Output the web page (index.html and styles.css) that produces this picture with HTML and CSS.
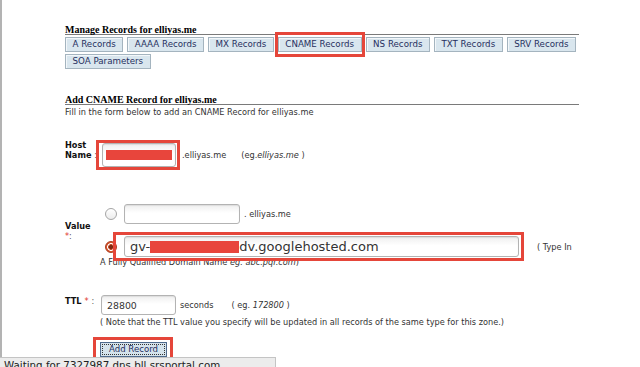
FILE: index.html
```html
<!DOCTYPE html>
<html>
<head>
<meta charset="utf-8">
<title>Add CNAME Record</title>
<link rel="stylesheet" href="styles.css">
</head>
<body>
<div class="page">
  <h2 class="section-title">Manage Records for elliyas.me</h2>
  <div class="tabs">
    <button class="tab">A Records</button>
    <button class="tab">AAAA Records</button>
    <button class="tab">MX Records</button>
    <span class="hl hl-tab"><button class="tab">CNAME Records</button></span>
    <button class="tab">NS Records</button>
    <button class="tab">TXT Records</button>
    <button class="tab">SRV Records</button>
    <button class="tab">SOA Parameters</button>
  </div>

  <h2 class="section-title second">Add CNAME Record for elliyas.me</h2>
  <p class="intro">Fill in the form below to add an CNAME Record for elliyas.me</p>

  <div class="host-row">
    <div class="lbl">Host Name <span class="colon">:</span></div>
    <div class="field">
      <span class="hl hl-host"><span class="box host-box"><span class="redact host-redact"></span></span></span>
      <span class="suffix">.elliyas.me</span>
      <span class="hint">(eg.<i>elliyas.me</i> )</span>
    </div>
  </div>

  <div class="value-grid">
    <div class="lbl value-lbl">Value<br><span class="req">*</span><span class="colon">:</span></div>
    <div class="opt">
      <input type="radio" name="v" class="radio">
      <input type="text" class="box opt-input">
      <span class="suffix2">. elliyas.me</span>
    </div>
    <div class="opt opt-2">
      <input type="radio" name="v" class="radio" checked>
      <span class="hl hl-value"><span class="box value-box">gv-<span class="redact value-redact"></span>dv.googlehosted.com</span></span>
      <span class="typein">( Type In</span>
    </div>
    <div class="fqdn">A Fully Qualified Domain Name <i>eg. abc.pqr.com</i>)</div>
  </div>

  <div class="ttl-grid">
    <div class="lbl ttl-lbl">TTL <span class="req">*</span> <span class="colon">:</span></div>
    <div class="ttl-field">
      <input type="text" class="box ttl-input" value="28800">
      <span class="seconds">seconds</span>
      <span class="hint2">( eg. <i>172800</i> )</span>
    </div>
    <div class="note">( Note that the TTL value you specify will be updated in all records of the same type for this zone.)</div>
  </div>

  <div class="actions">
    <span class="hl hl-btn"><button class="add-btn">Add Record</button></span>
  </div>
</div>
<div class="status">Waiting for 7327987.dns.bll.srsportal.com</div>
</body>
</html>
```
FILE: styles.css
```css
* { box-sizing: border-box; }
html, body { margin: 0; height: 100%; }
body {
  background: #fff;
  border-left: 2px solid #b3b3b3;
  font-family: "DejaVu Sans", Verdana, sans-serif;
  font-size: 8.2px;
  color: #333;
  overflow: hidden;
}
.page { padding: 25px 0 0 63px; width: 577px; }

.section-title {
  margin: 0;
  font: bold 10px/9px "Liberation Serif", "Times New Roman", serif;
  color: #000;
  border-bottom: 1px solid #7a7a7a;
}
.section-title.second { margin-top: 26px; }

.tabs { display: flex; flex-wrap: wrap; gap: 2px 4px; margin-top: 2px; }
.tab {
  height: 15px;
  margin: 0;
  padding: 0 6.5px;
  font: 8.7px/13px "DejaVu Sans", Verdana, sans-serif;
  color: #27305e;
  background: #d9e6ee;
  border: 1px solid #a4b4bf;
  border-radius: 0;
  box-shadow: inset 1px 1px 0 #f3f7fa;
}

.hl { position: relative; display: inline-flex; }
.hl::after {
  content: "";
  position: absolute;
  border: 3px solid #e5463a;
  pointer-events: none;
}
.hl-tab::after { inset: -5px -3px; }
.hl-host::after { inset: -3px -4px; }
.hl-value::after { inset: -4px -5px -4px -4px; }
.hl-btn::after { inset: -5px -6px -5px -7px; }

.intro { margin: 2px 0 0; line-height: 11px; color: #333; }

.lbl { width: 35px; flex: none; font-weight: bold; color: #111; line-height: 10px; }
.colon { font-weight: normal; color: #555; }
.req { color: #e0332a; font-weight: normal; }

.box {
  display: inline-flex;
  align-items: center;
  margin: 0;
  border: 1px solid #b3b3b3;
  border-radius: 3px;
  background: linear-gradient(#efefef, #fff 45%);
  box-shadow: inset 0 1px 1px rgba(0, 0, 0, 0.08);
  font-family: "DejaVu Sans", Verdana, sans-serif;
  color: #333;
  outline: none;
}
.redact { display: inline-block; background: #e8453c; }

.host-row { display: flex; margin-top: 22px; }
.field { display: flex; align-items: center; margin-top: 3px; }
.host-box { width: 74px; height: 24px; margin-left: 2px; padding: 0 3px; }
.host-redact { width: 66px; height: 10px; }
.suffix { margin-left: 6px; }
.hint { margin-left: 15px; }

.value-grid { display: grid; grid-template-columns: 35px auto; margin-top: 37px; }
.value-lbl { grid-row: 1 / 3; grid-column: 1; align-self: center; }
.opt { grid-column: 2; display: flex; align-items: center; white-space: nowrap; }
.opt-2 { margin-top: 12px; }
.radio {
  appearance: none;
  -webkit-appearance: none;
  width: 12px;
  height: 12px;
  margin: 0 0 0 5px;
  border-radius: 50%;
  border: 1px solid #a5a5a5;
  background: linear-gradient(#fff, #ececec);
  flex: none;
}
.radio:checked {
  border-color: #a8391c;
  background: radial-gradient(circle, #7d2a12 0 1.6px, #c4502d 2.2px 2.6px, #fff 3.1px 3.6px, #d9582f 4.1px);
}
.opt-input { width: 116px; height: 20px; margin-left: 7px; padding: 0 5px; font-size: 9px; }
.suffix2 { margin-left: 4px; }
.value-box { width: 395px; height: 21px; margin-left: 7px; padding: 0 5px; font-size: 13px; }
.value-redact { width: 89px; height: 12px; }
.typein { margin-left: 18px; }
.fqdn { grid-column: 2; line-height: 11px; }

.ttl-grid { display: grid; grid-template-columns: 35px auto; margin-top: 27px; }
.ttl-lbl { margin-top: 1px; }
.ttl-field { display: flex; align-items: center; white-space: nowrap; }
.ttl-input { width: 75px; height: 20px; margin-left: 1px; padding: 0 5px; font-size: 9.4px; }
.seconds { margin-left: 4px; }
.hint2 { margin-left: 18px; }
.note { grid-column: 2; margin-top: 2px; line-height: 11px; white-space: nowrap; }

.actions { padding-left: 35px; margin-top: 14px; }
.add-btn {
  height: 15px;
  margin: 0;
  padding: 0 8px;
  font: 8.6px/13px "DejaVu Sans", Verdana, sans-serif;
  color: #27305e;
  background: #d5e3ec;
  border: 1px solid #4f6a8c;
  border-radius: 0;
  outline: 1px dotted #333;
  outline-offset: -3px;
}

.status {
  position: fixed;
  left: 0;
  bottom: 0;
  width: 276px;
  height: 10px;
  overflow: hidden;
  padding: 1px 0 0 4px;
  background: #ececec;
  border-top: 1px solid #c4c4c4;
  border-right: 1px solid #c4c4c4;
  font-size: 10.3px;
  line-height: 12px;
  color: #222;
  white-space: nowrap;
}
```
